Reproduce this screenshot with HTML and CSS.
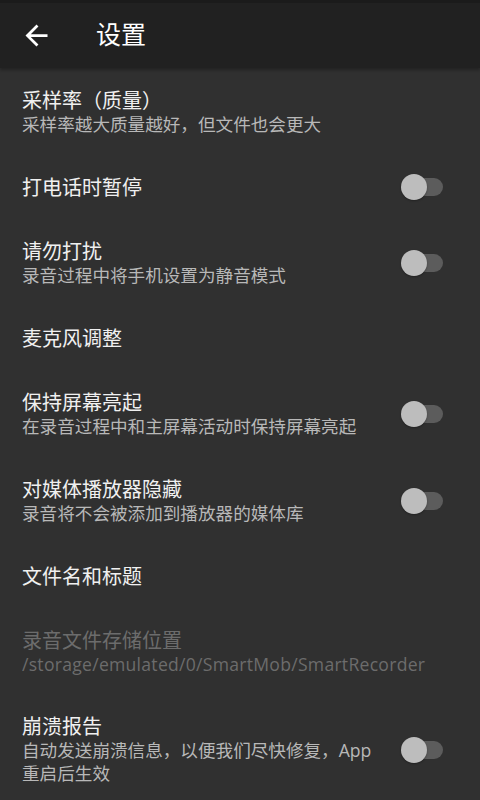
FILE: index.html
```html
<!DOCTYPE html>
<html lang="zh-CN">
<head>
    <meta charset="UTF-8">
    <meta name="viewport" content="width=device-width, initial-scale=1.0">
    <title>设置</title>
    <link rel="stylesheet" href="styles.css">
</head>
<body>
    <div class="appbar">
        <svg class="back" viewBox="0 0 24 24" width="33" height="33">
            <path d="M20 11H7.830l5.590-5.590L12 4l-8 8 8 8 1.410-1.410L7.830 13H20v-2z" fill="#fff"/>
        </svg>
        <div class="appbar-title">设置</div>
    </div>

    <div class="list">
        <div class="pref">
            <div class="text">
                <div class="title">采样率（质量）</div>
                <div class="summary">采样率越大质量越好，但文件也会更大</div>
            </div>
        </div>
        <div class="pref single">
            <div class="text">
                <div class="title">打电话时暂停</div>
            </div>
            <span class="switch"></span>
        </div>
        <div class="pref">
            <div class="text">
                <div class="title">请勿打扰</div>
                <div class="summary">录音过程中将手机设置为静音模式</div>
            </div>
            <span class="switch"></span>
        </div>
        <div class="pref single">
            <div class="text">
                <div class="title">麦克风调整</div>
            </div>
        </div>
        <div class="pref">
            <div class="text">
                <div class="title">保持屏幕亮起</div>
                <div class="summary">在录音过程中和主屏幕活动时保持屏幕亮起</div>
            </div>
            <span class="switch"></span>
        </div>
        <div class="pref">
            <div class="text">
                <div class="title">对媒体播放器隐藏</div>
                <div class="summary">录音将不会被添加到播放器的媒体库</div>
            </div>
            <span class="switch"></span>
        </div>
        <div class="pref single">
            <div class="text">
                <div class="title">文件名和标题</div>
            </div>
        </div>
        <div class="pref disabled">
            <div class="text">
                <div class="title">录音文件存储位置</div>
                <div class="summary path">/storage/emulated/0/SmartMob/SmartRecorder</div>
            </div>
        </div>
        <div class="pref">
            <div class="text">
                <div class="title">崩溃报告</div>
                <div class="summary">自动发送崩溃信息，以便我们尽快修复，App 重启后生效</div>
            </div>
            <span class="switch"></span>
        </div>
    </div>
</body>
</html>
```

FILE: styles.css
```css
body {
    margin: 0;
    background-color: #303030;
    font-family: "Open Sans", "Noto Sans CJK SC", sans-serif;
    color: #f0f0f0;
    overflow: hidden;
}
.appbar {
    display: flex;
    align-items: center;
    height: 65px;
    border-top: 3px solid #1b1b1b;
    background-color: #212121;
    box-shadow: 0 2px 3px rgba(0, 0, 0, 0.3);
    position: relative;
}
.back {
    margin-left: 20px;
    margin-right: 43px;
}
.appbar-title {
    font-size: 25px;
    line-height: 30px;
    margin-top: -4px;
    color: #fff;
}
.pref {
    display: flex;
    align-items: center;
    box-sizing: border-box;
    min-height: 87px;
    padding: 19px 37px 19px 22px;
}
.pref.single {
    min-height: 64px;
}
.text {
    flex: 1;
    padding-right: 16px;
}
.title {
    font-size: 20px;
    line-height: 25px;
}
.summary {
    font-size: 17.6px;
    line-height: 23px;
    color: #b8b8b8;
}
.summary.path {
    letter-spacing: 0.26px;
}
.disabled .title,
.disabled .summary {
    color: #6c6c6c;
}
.switch {
    position: relative;
    flex: none;
    width: 42px;
    height: 26px;
}
.switch::before {
    content: "";
    position: absolute;
    left: 3px;
    right: 0;
    top: 4px;
    height: 18px;
    border-radius: 9px;
    background-color: #5c5c5c;
}
.switch::after {
    content: "";
    position: absolute;
    left: 0;
    top: 0;
    width: 26px;
    height: 26px;
    border-radius: 50%;
    background-color: #bdbdbd;
    box-shadow: 0 1px 2px rgba(0, 0, 0, 0.3);
}
```
